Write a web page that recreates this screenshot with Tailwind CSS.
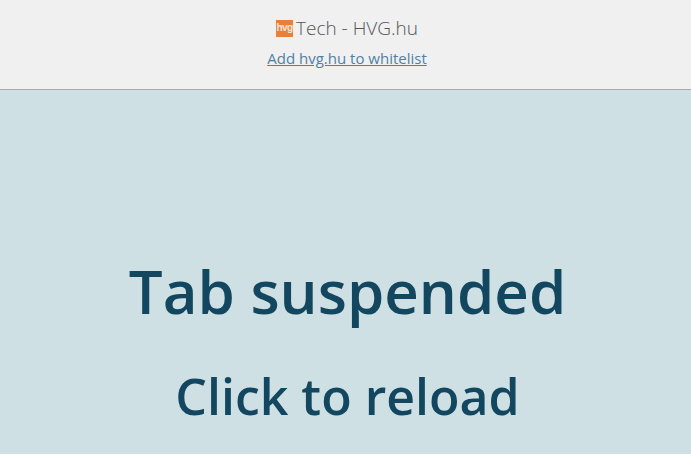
<!DOCTYPE html>
<html lang="en">
<head>
	<meta charset="UTF-8">
	<title>Tech - HVG.hu</title>
	<script src="https://cdn.jsdelivr.net/npm/@tailwindcss/browser@4"></script>
</head>
<body class="h-[454px] overflow-hidden bg-[#cfe0e5] font-['Open_Sans',sans-serif]">
	<div class="h-[90px] bg-[#f0f0f0] border-b border-[#aaaaaa] flex flex-col items-center pt-[15px] pl-[3px]">
		<div class="flex items-center h-[26px] text-[19px] font-light text-[#555555]">
			<span class="w-[17px] h-[17px] mr-[3px] bg-[#e8803c] flex items-center justify-center overflow-hidden text-[#fbe6d6] text-[10px] font-bold leading-none font-['Liberation_Sans',sans-serif] tracking-[-0.5px]">hvg</span>
			<span>Tech - HVG.hu</span>
		</div>
		<a href="#" class="mt-[6px] text-[15px] underline text-[#4f81a5]">Add hvg.hu to whitelist</a>
	</div>
	<div class="flex flex-col items-center pl-[4px] text-[#134760] font-semibold">
		<h1 class="mt-[160px] text-[60px] leading-[82px]">Tab suspended</h1>
		<h2 class="mt-[30px] text-[50px] leading-[68px]">Click to reload</h2>
	</div>
</body>
</html>
